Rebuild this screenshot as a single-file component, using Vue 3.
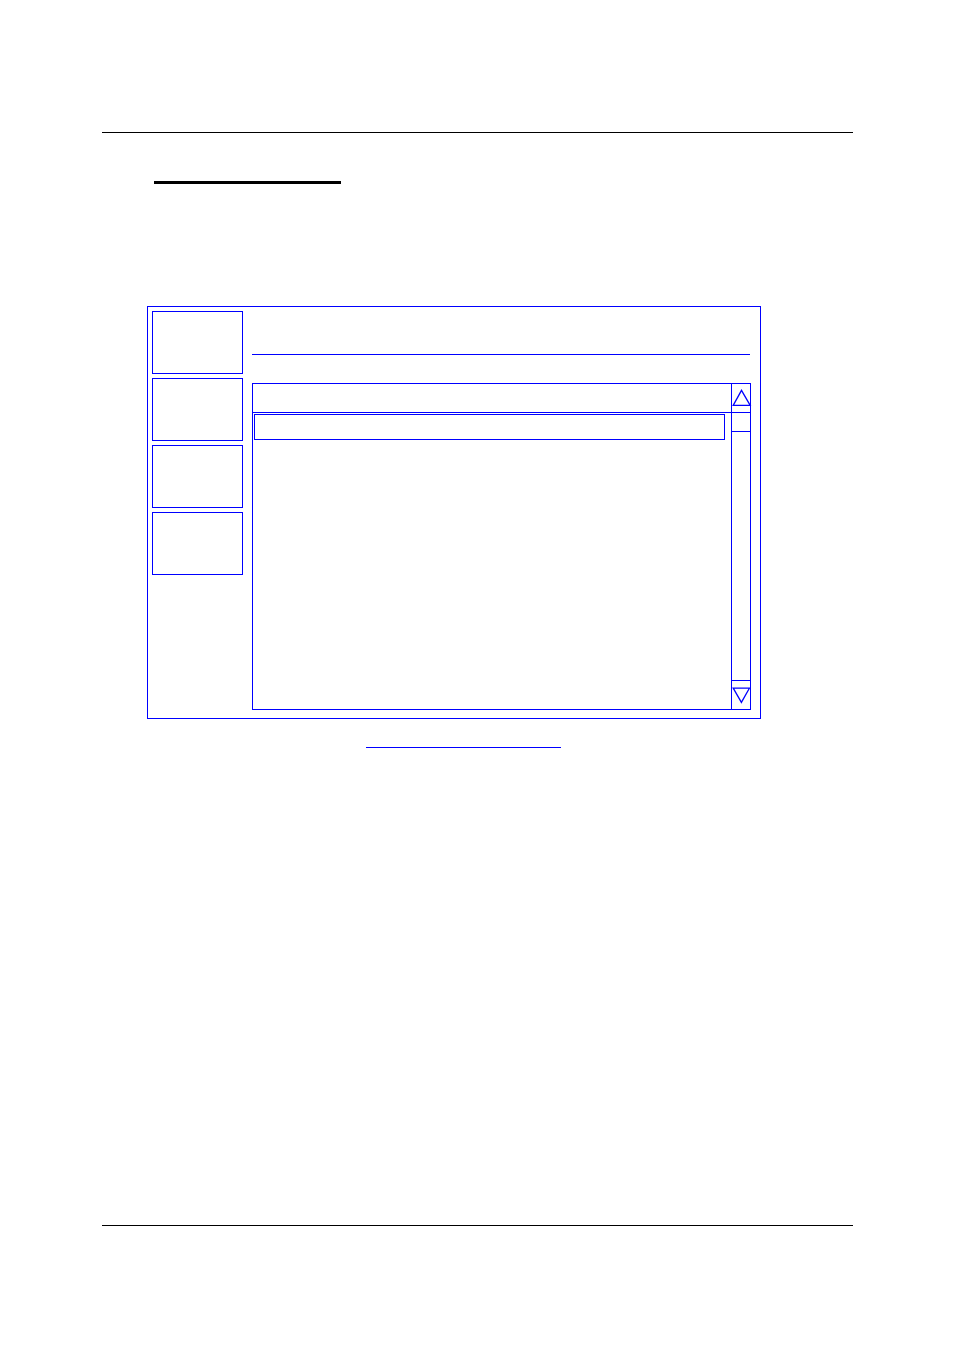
<template>
    <main class="page">
        <hr class="rule">
        <div class="heading-line"></div>

        <section class="screen">
            <nav class="side-menu">
                <button
                    v-for="n in 4"
                    :key="n"
                    type="button"
                    class="side-button"
                    :aria-label="`Menu ${n}`"
                ></button>
            </nav>
            <div class="content">
                <div class="title-bar"></div>
                <div class="list">
                    <div class="list-body">
                        <div class="list-header"></div>
                        <button type="button" class="list-row" aria-label="Selected row"></button>
                    </div>
                    <div class="scrollbar">
                        <button type="button" class="arrow arrow-up" aria-label="Scroll up">
                            <svg viewBox="0 0 18 28">
                                <path d="M1.2 21.4 L9.5 6.4 L18.2 21.4 Z"/>
                            </svg>
                        </button>
                        <div class="thumb"></div>
                        <div class="track"></div>
                        <button type="button" class="arrow arrow-down" aria-label="Scroll down">
                            <svg viewBox="0 0 18 28">
                                <path d="M1.2 7.2 H17.4 L9.4 21.4 Z"/>
                            </svg>
                        </button>
                    </div>
                </div>
            </div>
        </section>

        <div class="caption-line"></div>
        <hr class="rule rule-bottom">
    </main>
</template>

<script setup>
</script>

<style>
body {
    margin: 0;
    background: #fff;
}
</style>

<style scoped>
.page {
    display: flex;
    flex-direction: column;
    box-sizing: border-box;
    min-height: 100vh;
    padding: 132px 101px 125px 102px;
}
.rule {
    width: 100%;
    height: 1px;
    margin: 0;
    border: 0;
    background: #000;
}
.rule-bottom {
    margin-top: auto;
}
.heading-line {
    width: 187px;
    height: 3px;
    margin: 48px 0 0 52px;
    background: #000;
}
.screen {
    display: flex;
    gap: 9px;
    margin: 122px 92px 0 45px;
    padding: 4px 9px 8px 4px;
    border: 1px solid #00f;
}
button {
    box-sizing: border-box;
    padding: 0;
    border: 0;
    border-radius: 0;
    background: transparent;
}
.side-menu {
    display: flex;
    flex-direction: column;
    gap: 4px;
    width: 91px;
}
.side-button {
    height: 63px;
    border: 1px solid #00f;
}
.content {
    flex: 1;
    min-width: 0;
}
.title-bar {
    height: 43px;
    margin: 0 1px 28px 0;
    border-bottom: 1px solid #00f;
}
.list {
    display: flex;
    height: 325px;
    border: 1px solid #00f;
}
.list-body {
    flex: 1;
    display: flex;
    flex-direction: column;
}
.list-header {
    height: 28px;
    border-bottom: 1px solid #00f;
}
.list-row {
    height: 26px;
    margin: 1px 6px 0 1px;
    border: 1px solid #00f;
}
.scrollbar {
    display: flex;
    flex-direction: column;
    width: 18px;
    border-left: 1px solid #00f;
}
.arrow {
    height: 29px;
}
.arrow-up {
    border-bottom: 1px solid #00f;
}
.arrow-down {
    border-top: 1px solid #00f;
}
.arrow svg {
    display: block;
    width: 18px;
    height: 28px;
    overflow: visible;
    fill: none;
    stroke: #00f;
    stroke-width: 1.3;
}
.thumb {
    height: 18px;
    border-bottom: 1px solid #00f;
}
.track {
    flex: 1;
}
.caption-line {
    width: 195px;
    height: 1px;
    margin: 28px 0 0 264px;
    background: #00f;
}
</style>
